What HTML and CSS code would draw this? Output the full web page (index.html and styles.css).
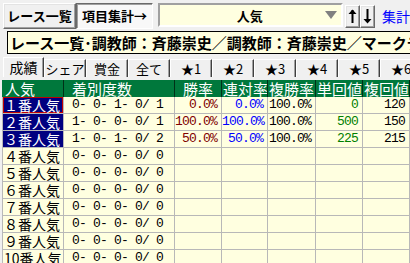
FILE: index.html
```html
<!DOCTYPE html>
<html lang="ja">
<head>
<meta charset="utf-8">
<link rel="stylesheet" href="styles.css">
</head>
<body>
<div class="toolbar">
  <div class="btn raised">レース一覧</div>
  <div class="btn pressed">項目集計→</div>
  <div class="combo">
    <span class="combo-text">人気</span>
    <svg class="combo-arrow" width="12" height="8" viewBox="0 0 12 8"><polygon points="0,0 12,0 6,8" fill="#808080"/></svg>
  </div>
  <div class="arrowbtn raised">
    <svg width="9" height="15" viewBox="0 0 9 15"><path d="M4.5 1 L4.5 14" stroke="#000" stroke-width="2"/><path d="M0.5 5 L4.5 0.5 L8.5 5 Z" fill="#000"/></svg>
  </div>
  <div class="arrowbtn raised">
    <svg width="9" height="15" viewBox="0 0 9 15"><path d="M4.5 0 L4.5 13" stroke="#000" stroke-width="2"/><path d="M0.5 10 L4.5 14.5 L8.5 10 Z" fill="#000"/></svg>
  </div>
  <span class="link">集計</span>
</div>
<div class="title">レース一覧･調教師：斉藤崇史／調教師：斉藤崇史／マークデータ</div>
<div class="tabs">
  <div class="tab selected">成績</div>
  <div class="tab">シェア</div>
  <div class="tab">賞金</div>
  <div class="tab">全て</div>
  <div class="tab">★1</div>
  <div class="tab">★2</div>
  <div class="tab">★3</div>
  <div class="tab">★4</div>
  <div class="tab">★5</div>
  <div class="tab">★6</div>
</div>
<div class="grid">
  <div class="h h1">人気</div><div class="h h2">着別度数</div><div class="h h3">勝率</div><div class="h">連対率</div><div class="h">複勝率</div><div class="h">単回値</div><div class="h">複回値</div>

  <div class="c lab sel focus">１番人気</div><div class="c cnt">0- 0- 1- 0/ 1</div><div class="c num red">0.0%</div><div class="c num blue">0.0%</div><div class="c num">100.0%</div><div class="c num green">0</div><div class="c num">120</div>
  <div class="c lab sel">２番人気</div><div class="c cnt">1- 0- 0- 0/ 1</div><div class="c num red">100.0%</div><div class="c num blue">100.0%</div><div class="c num">100.0%</div><div class="c num green">500</div><div class="c num">150</div>
  <div class="c lab sel">３番人気</div><div class="c cnt">1- 0- 1- 0/ 2</div><div class="c num red">50.0%</div><div class="c num blue">50.0%</div><div class="c num">100.0%</div><div class="c num green">225</div><div class="c num">215</div>
  <div class="c lab">４番人気</div><div class="c cnt">0- 0- 0- 0/ 0</div><div class="c"></div><div class="c"></div><div class="c"></div><div class="c"></div><div class="c"></div>
  <div class="c lab">５番人気</div><div class="c cnt">0- 0- 0- 0/ 0</div><div class="c"></div><div class="c"></div><div class="c"></div><div class="c"></div><div class="c"></div>
  <div class="c lab">６番人気</div><div class="c cnt">0- 0- 0- 0/ 0</div><div class="c"></div><div class="c"></div><div class="c"></div><div class="c"></div><div class="c"></div>
  <div class="c lab">７番人気</div><div class="c cnt">0- 0- 0- 0/ 0</div><div class="c"></div><div class="c"></div><div class="c"></div><div class="c"></div><div class="c"></div>
  <div class="c lab">８番人気</div><div class="c cnt">0- 0- 0- 0/ 0</div><div class="c"></div><div class="c"></div><div class="c"></div><div class="c"></div><div class="c"></div>
  <div class="c lab">９番人気</div><div class="c cnt">0- 0- 0- 0/ 0</div><div class="c"></div><div class="c"></div><div class="c"></div><div class="c"></div><div class="c"></div>
  <div class="c lab">10番人気</div><div class="c cnt">0- 0- 0- 0/ 0</div><div class="c"></div><div class="c"></div><div class="c"></div><div class="c"></div><div class="c"></div>
</div>
</body>
</html>
```
FILE: styles.css
```css
html, body {
  margin: 0;
  padding: 0;
}
body {
  width: 410px;
  height: 263px;
  overflow: hidden;
  background: #f0f0f0;
  font-family: "Noto Sans CJK JP", "Liberation Sans", sans-serif;
  color: #000;
}
.toolbar {
  display: flex;
  align-items: flex-start;
  padding: 3px 0 0 3px;
  height: 26px;
}
.btn {
  box-sizing: border-box;
  height: 26px;
  font-size: 13px;
  font-weight: bold;
  line-height: 24px;
  text-align: center;
  white-space: nowrap;
}
.btn:first-child { width: 74px; }
.btn.pressed { width: 78px; }
.raised {
  border: 1px solid;
  border-color: #ffffff #696969 #696969 #ffffff;
  box-shadow: inset -1px -1px 0 #a0a0a0, inset 1px 1px 0 #e3e3e3;
  background: #f0f0f0;
}
.pressed {
  border: 1px solid;
  border-color: #696969 #ffffff #ffffff #696969;
  box-shadow: inset 1px 1px 0 #a0a0a0;
  background: #f8f8f8;
}
.combo {
  box-sizing: border-box;
  margin-left: 5px;
  width: 188px;
  height: 24px;
  background: #ffffe0;
  border: 2px solid;
  border-color: #a0a0a0 #ffffff #ffffff #a0a0a0;
  display: flex;
  align-items: center;
}
.combo-text {
  flex: 1;
  text-align: center;
  font-size: 13px;
  font-weight: bold;
  padding-left: 14px;
}
.combo-arrow {
  margin-right: 4px;
}
.arrowbtn {
  box-sizing: border-box;
  width: 15px;
  height: 23px;
  margin-top: 2px;
  display: flex;
  align-items: center;
  justify-content: center;
}
.arrowbtn:nth-of-type(1) { margin-left: 2px; }
.combo + .arrowbtn { margin-left: 2px; }
.link {
  margin-left: 7px;
  margin-top: 4px;
  color: #0000ff;
  font-size: 14px;
  line-height: 18px;
  white-space: nowrap;
}
.title {
  box-sizing: border-box;
  margin: 2px 0 0 7px;
  height: 23px;
  width: 420px;
  border: 1px solid #000;
  border-right: none;
  background: #ffffe0;
  font-size: 15px;
  font-weight: bold;
  line-height: 21px;
  padding-left: 2px;
  white-space: nowrap;
  overflow: hidden;
}
.tabs {
  display: flex;
  align-items: flex-end;
  margin-top: 3px;
  padding-left: 3px;
  height: 20px;
}
.tab {
  box-sizing: border-box;
  width: 42px;
  height: 18px;
  flex: none;
  border-top: 1px solid #ffffff;
  border-left: 1px solid #ffffff;
  border-right: 1px solid #404040;
  box-shadow: inset -1px 0 0 #a0a0a0;
  font-size: 13px;
  line-height: 17px;
  text-align: center;
  white-space: nowrap;
}
.tab.selected {
  width: 41px;
  height: 20px;
  line-height: 19px;
  font-size: 14px;
}
.grid {
  margin: 3px 0 0 2px;
  display: grid;
  grid-template-columns: 62px 111px 47px 46px 48px 47px 47px;
  grid-auto-rows: 17px;
}
.h {
  box-sizing: border-box;
  background: #00783c;
  color: #ffffff;
  font-size: 15px;
  line-height: 17px;
  border-right: 1px solid #003018;
  white-space: nowrap;
  overflow: hidden;
  padding-left: 1px;
}
.h1 { padding-left: 3px; }
.h2 { padding-left: 8px; }
.h3 { padding-left: 8px; }
.c {
  box-sizing: border-box;
  background: #ffffe0;
  border-right: 1px solid #b8b8b8;
  border-bottom: 1px solid #b8b8b8;
  font-family: "Liberation Mono", "DejaVu Sans Mono", monospace;
  font-size: 13px;
  letter-spacing: -0.8px;
  line-height: 16px;
  white-space: pre;
  overflow: hidden;
}
.lab {
  border-left: 1px solid #b8b8b8;
  font-family: "Noto Sans CJK JP", sans-serif;
  font-size: 14px;
  letter-spacing: 0;
  padding-left: 1px;
}
.sel {
  background: #000080;
  color: #ffffff;
}
.focus {
  box-shadow: inset 0 0 0 1px #c00000;
}
.cnt { padding-left: 8px; }
.num {
  text-align: right;
  padding-right: 4px;
}
.red { color: #800000; }
.blue { color: #0000ff; }
.green { color: #008000; }
```
